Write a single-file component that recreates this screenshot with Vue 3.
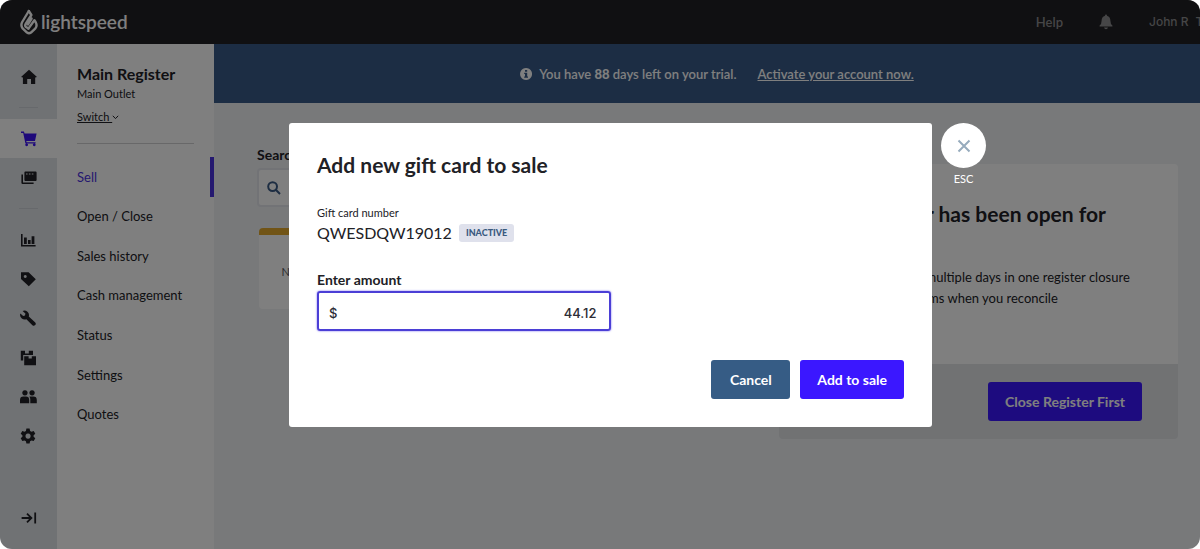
<script setup>
import { ref } from 'vue'

const amount = ref('44.12')

const navItems = ['Sell', 'Open / Close', 'Sales history', 'Cash management', 'Status', 'Settings', 'Quotes']

const railTop = [
  { name: 'Home', d: 'M8 .8 L16 8 L14.2 8.6 V15 H10 V10 H6.2 V15 H1.9 V8.6 L0 8 Z' }
]
const railSell = [
  { name: 'Sell', active: true, d: 'M0 .6 H2.9 L3.6 2.4 H15.6 L14 10 H5.3 L5.6 11.2 H14.6 V12.5 H4.4 L2.2 2 H0 Z M5.6 12.4 A1.4 1.4 0 1 0 5.7 12.4 Z M13.2 12.4 A1.4 1.4 0 1 0 13.3 12.4 Z' },
  { name: 'Registers', d: 'M4.4 1.6 H14.6 Q15.6 1.6 15.6 2.6 V10 Q15.6 11 14.6 11 H4.4 Q3.4 11 3.4 10 V2.6 Q3.4 1.6 4.4 1.6 Z M5 3.4 V4.6 H6.6 V3.4 Z M7.9 3.4 V4.6 H9.5 V3.4 Z M10.8 3.4 V4.6 H12.4 V3.4 Z M.4 4.4 H2 V12.4 H12.6 V14 H1.6 Q.4 14 .4 12.8 Z' }
]
const railManage = [
  { name: 'Reporting', d: 'M1 2 H2.6 V13 H15.6 V14.6 H1 Z M4 5.6 H6.8 V12 H4 Z M8 8 H10.6 V12 H8 Z M11.6 4.2 H14.4 V12 H11.6 Z' },
  { name: 'Catalog', d: 'M1 1.2 H8.6 L15.8 8.2 L8.8 15.2 L1 8 Z M5.2 3.9 A1.5 1.5 0 1 0 5.3 3.9 Z' },
  { name: 'Setup tools', d: 'M2.6 .9 A4.7 4.7 0 0 1 8.8 6.6 L15 12.2 A1.9 1.9 0 0 1 12.4 15.2 L6.4 9.2 A4.7 4.7 0 0 1 .3 3.4 L3.2 6 L5 5.4 L5.4 3.6 Z' },
  { name: 'Inventory', d: 'M.8 .8 H5 V3.4 H8.8 V.8 H13 V5 H3.2 V10.4 H.8 Z M4.2 6.2 H8.6 V8.4 H11.8 V6.2 H16 V15.2 H4.2 Z' },
  { name: 'Customers', d: 'M4.9 1.2 A2.7 2.7 0 1 0 5 1.2 Z M12 1.2 A2.7 2.7 0 1 0 12.1 1.2 Z M0 14.2 V11 Q0 7.6 3.4 7.6 H6 Q9.2 7.6 9.2 11 V14.2 Z M10.3 14.2 V10.6 Q10.3 9 9.4 7.6 H13.4 Q16.8 7.6 16.8 11 V14.2 Z' },
  { name: 'Setup', d: 'M6.4 .6 H9.6 L10.1 2.9 L11.5 3.7 L13.7 3 L15.3 5.8 L13.6 7.3 V8.8 L15.3 10.3 L13.7 13 L11.5 12.4 L10.1 13.2 L9.6 15.5 H6.4 L5.9 13.2 L4.5 12.4 L2.3 13 L.7 10.3 L2.4 8.8 V7.3 L.7 5.8 L2.3 3 L4.5 3.7 L5.9 2.9 Z M8 5.5 A2.6 2.6 0 1 0 8.1 5.5 Z' }
]
</script>

<template>
  <div class="app">
    <header class="topbar">
      <a href="#" class="brand">
        <svg width="18" height="26" viewBox="0 0 18 26" fill="none" stroke="#fff" stroke-width="2.4" stroke-linejoin="round" stroke-linecap="round">
          <path d="M8.8 2 L2.2 13 Q.4 16.6 2.6 19.4 L7 23.6 Q9 25 11 23.6 L15.4 19.4 Q17.6 16.4 15.6 13 L14.4 11.2 L8.4 19.6" />
          <path d="M8.8 2 L11.4 6 L5.6 15 Q4.6 16.8 6 18 L8.4 19.6 M11.6 9.6 L8 15.4" />
        </svg>
        <span>lightspeed</span>
      </a>
      <div class="top-links">
        <a href="#">Help</a>
        <button type="button" class="bell" aria-label="Notifications">
          <svg width="14" height="16" viewBox="0 0 14 16" fill="currentColor"><path d="M7 .6 Q8 .6 8 1.8 Q11.4 2.8 11.4 6.8 Q11.4 10 13.4 11.6 V12.6 H.6 V11.6 Q2.6 10 2.6 6.8 Q2.6 2.8 6 1.8 Q6 .6 7 .6 Z M5 13.4 H9 Q8.6 15.2 7 15.2 Q5.4 15.2 5 13.4 Z" /></svg>
        </button>
        <a href="#" class="user"><span>John R</span><span>T</span></a>
      </div>
    </header>

    <div class="body">
      <nav class="rail" aria-label="Primary">
        <a v-for="i in railTop" :key="i.name" href="#" class="rail-item" :aria-label="i.name">
          <svg width="16" height="16" viewBox="0 0 16 16" fill="currentColor" fill-rule="evenodd"><path :d="i.d" /></svg>
        </a>
        <div class="rail-gap"></div>
        <a v-for="i in railSell" :key="i.name" href="#" class="rail-item" :class="{ active: i.active }" :aria-label="i.name">
          <svg width="16" height="16" viewBox="0 0 16 16" fill="currentColor" fill-rule="evenodd"><path :d="i.d" /></svg>
        </a>
        <div class="rail-gap"></div>
        <div class="rail-group">
          <a v-for="i in railManage" :key="i.name" href="#" class="rail-item" :aria-label="i.name">
            <svg width="17" height="16" viewBox="0 0 17 16" fill="currentColor" fill-rule="evenodd"><path :d="i.d" /></svg>
          </a>
        </div>
        <button type="button" class="rail-item collapse" aria-label="Expand menu">
          <svg width="16" height="16" viewBox="0 0 16 16" fill="none" stroke="currentColor" stroke-width="1.8"><path d="M.6 8 H10 M6 3.6 L10.4 8 L6 12.4 M14.2 2.6 V13.4" /></svg>
        </button>
      </nav>

      <aside class="sidebar">
        <div class="register">
          <h2>Main Register</h2>
          <p>Main Outlet</p>
          <a href="#" class="switch"><u>Switch&nbsp;</u><svg width="7" height="5" viewBox="0 0 7 5" fill="none" stroke="currentColor"><path d="M.8 .8 L3.5 3.6 L6.2 .8" /></svg></a>
        </div>
        <nav class="menu" aria-label="Sell">
          <a v-for="(n, k) in navItems" :key="n" href="#" :class="{ current: k === 0 }">{{ n }}</a>
        </nav>
      </aside>

      <main class="main">
        <div class="banner">
          <svg width="12" height="12" viewBox="0 0 12 12" fill="currentColor" fill-rule="evenodd"><path d="M6 0 A6 6 0 1 0 6.1 0 Z M5 2 H7.2 V3.8 H5 Z M4.2 4.8 H7.2 V8.6 H8 V9.8 H4.2 V8.6 H5 V6 H4.2 Z" /></svg>
          <span>You have <b>88</b> days left on your trial.</span>
          <a href="#">Activate your account now.</a>
        </div>
        <div class="workspace">
          <section class="products">
            <label for="search">Search for Products</label>
            <div class="search-box">
              <svg width="14" height="14" viewBox="0 0 14 14" fill="none" stroke="currentColor" stroke-width="2"><circle cx="5.6" cy="5.6" r="4.4" /><path d="M8.8 8.8 L13 13" /></svg>
              <input id="search" type="text" />
            </div>
            <button type="button" class="tile">New Product</button>
          </section>
          <section class="notice">
            <div class="notice-body">
              <h2>Your register has been open for<br />24 hours</h2>
              <p>Combining sales of multiple days in one register closure<br />could lead to problems when you reconcile</p>
            </div>
            <div class="notice-foot"><button type="button" class="btn primary">Close Register First</button></div>
          </section>
        </div>
      </main>
    </div>

    <div class="overlay">
      <form class="modal" role="dialog" aria-labelledby="dialog-title" @submit.prevent>
        <h1 id="dialog-title">Add new gift card to sale</h1>
        <p class="caption">Gift card number</p>
        <p class="number"><span>QWESDQW19012</span><span class="badge">INACTIVE</span></p>
        <label for="amount">Enter amount</label>
        <div class="amount"><span>$</span><input id="amount" v-model="amount" type="text" inputmode="decimal" /></div>
        <div class="actions">
          <button type="button" class="btn secondary">Cancel</button>
          <button type="submit" class="btn primary">Add to sale</button>
        </div>
      </form>
      <button type="button" class="close">
        <span class="close-circle"><svg width="14" height="14" viewBox="0 0 14 14" fill="none" stroke="#96abbd" stroke-width="2"><path d="M1.5 1.5 L12.5 12.5 M12.5 1.5 L1.5 12.5" /></svg></span>
        <span>ESC</span>
      </button>
    </div>
  </div>
</template>

<style>
body { background: #fff; }
</style>

<style scoped>
* { box-sizing: border-box; margin: 0; }
a { color: inherit; text-decoration: none; }
button, input { font: inherit; border: 0; background: none; padding: 0; color: inherit; }
svg { flex: none; display: block; }

.app {
  position: relative;
  display: flex;
  flex-direction: column;
  min-height: 100vh;
  border-radius: 12px;
  overflow: hidden;
  background: #f1f3f5;
  color: #212126;
  font-family: Lato, "Liberation Sans", sans-serif;
  font-size: 13px;
  line-height: 20px;
}

.topbar {
  display: flex;
  align-items: center;
  justify-content: space-between;
  height: 44px;
  padding-left: 20px;
  background: #212124;
  color: #fff;
}
.brand { display: flex; align-items: center; gap: 3px; font: 600 19px/26px Lato, sans-serif; }
.top-links { display: flex; align-items: center; color: #8c8c8e; font-weight: 600; white-space: nowrap; }
.bell { margin: 0 36px; }
.user { display: flex; gap: 7px; width: 51px; overflow: hidden; font: 500 12px/20px Inter, sans-serif; }

.body { flex: 1; display: flex; }

.rail { display: flex; flex-direction: column; width: 57px; padding-top: 13px; background: #e1e4e8; }
.rail-item { display: flex; align-items: center; justify-content: center; height: 39px; color: #212126; }
.rail-item.active { background: #fff; color: #3d12f5; }
.rail-gap { display: flex; align-items: center; height: 23px; padding: 0 19px; }
.rail-gap::before { content: ""; flex: 1; height: 1px; background: #cfd3d8; }
.rail-group { display: grid; grid-auto-rows: 1fr; height: 236px; }
.rail-group .rail-item { height: auto; }
.collapse { margin: auto 0 12px; }

.sidebar { width: 157px; background: #fff; }
.register { margin: 0 20px; height: 100px; padding-top: 20px; border-bottom: 1px solid #d0d0d3; }
.register h2 { font-size: 16px; line-height: 20px; white-space: nowrap; }
.register p { font-size: 11px; line-height: 20px; }
.switch { display: flex; align-items: center; margin-top: 3px; font-size: 11px; line-height: 20px; }
.menu { display: grid; grid-auto-rows: 1fr; height: 277px; margin-top: 13px; }
.menu a { display: flex; align-items: center; padding-left: 20px; border-right: 4px solid transparent; }
.menu .current { color: #4b33e0; border-color: #4b33e0; }

.main { flex: 1; min-width: 0; }
.banner { display: flex; align-items: center; justify-content: center; gap: 7px; height: 59px; padding-left: 20px; background: #385a88; color: #fff; font-weight: 600; }
.banner a { margin-left: 14px; text-decoration: underline; }
.workspace { display: grid; grid-template-columns: 1fr 399px; gap: 40px; padding: 42px 22px 0 43px; }
.products label { display: block; font-size: 14px; font-weight: 700; line-height: 20px; }
.search-box { display: flex; align-items: center; gap: 10px; height: 39px; margin-top: 3px; padding: 0 8px; border: 2px solid #e4e6ec; border-radius: 4px; background: #fff; color: #3a5a85; }
.search-box input { flex: 1; min-width: 0; }
.tile { width: 108px; height: 81px; margin: 21px 0 0 2px; border-top: 7px solid #e3a92c; border-radius: 4px; background: #fff; color: #55555a; font-size: 11px; }
.notice { margin-top: 19px; border-radius: 4px; overflow: hidden; }
.notice-body { height: 200px; padding: 36px 0 0 36px; background: #fff; white-space: nowrap; }
.notice h2 { font-size: 21px; line-height: 28px; }
.notice p { margin-top: 11px; line-height: 21px; }
.notice-foot { display: flex; justify-content: flex-end; padding: 18px 36px; background: #e2e4e7; }

.btn { min-width: 79px; height: 39px; padding: 0 17px; border-radius: 3px; color: #fff; font-weight: 700; font-size: 14px; white-space: nowrap; }
.primary { background: #3b17ff; }
.secondary { background: #365c85; }

.overlay {
  position: absolute;
  inset: 0;
  display: flex;
  align-items: flex-start;
  gap: 9px;
  padding: 123px 214px 0 289px;
  background: rgba(0, 0, 0, 0.5);
}
.modal { flex: 1; padding: 28px; border-radius: 3px; background: #fff; }
.modal h1 { font-size: 21px; line-height: 28px; }
.caption { margin-top: 24px; font-size: 11px; line-height: 20px; }
.number { display: flex; align-items: center; gap: 7px; font-size: 16px; line-height: 20px; }
.badge { padding: 0 7px; border-radius: 3px; background: #dfe1ec; color: #3a5a80; font-size: 9px; line-height: 18px; font-weight: 900; }
.modal label { display: block; margin-top: 27px; font-size: 14px; line-height: 20px; font-weight: 700; }
.amount { display: flex; align-items: center; width: 50%; height: 40px; margin-top: 1px; padding: 3px 12px 0 10px; border: 2px solid #4b3fd6; border-radius: 3px; box-shadow: 0 0 2px #6a5cf0; font: 500 13px/20px Inter, sans-serif; color: #2d2d35; }
.amount input { flex: 1; min-width: 0; text-align: right; outline: 0; }
.actions { display: flex; justify-content: flex-end; gap: 10px; margin-top: 29px; }
.close { display: flex; flex-direction: column; align-items: center; width: 45px; color: #fff; font-size: 11px; line-height: 22px; }
.close-circle { display: flex; align-items: center; justify-content: center; width: 45px; height: 45px; border-radius: 50%; background: #fff; }
</style>
